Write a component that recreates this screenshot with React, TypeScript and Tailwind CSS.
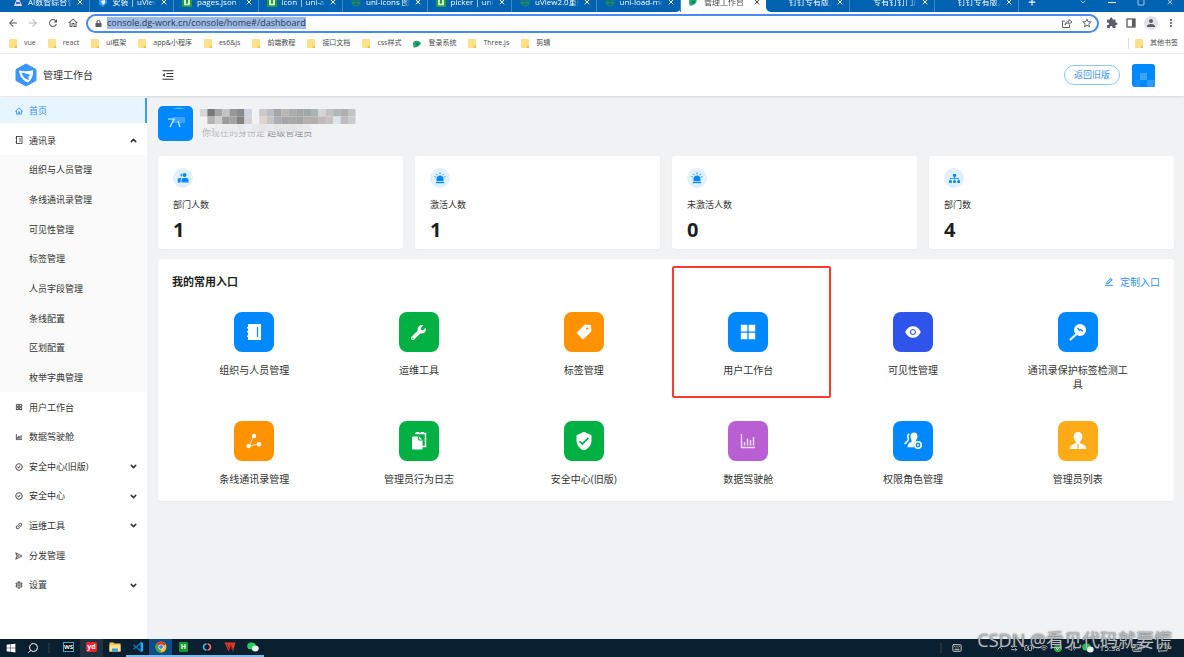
import React, { useState } from "react";
import {
  AiFillAppstore,
  AiFillEye,
  AiFillTag,
  AiOutlineAppstore,
  AiOutlineBarChart,
  AiOutlineCheckCircle,
  AiOutlineEdit,
  AiOutlineHome,
  AiOutlineLink,
  AiOutlineMenuFold,
  AiOutlineSend,
  AiOutlineSetting,
} from "react-icons/ai";
import { FaSitemap, FaWrench, FaLock, FaWindows } from "react-icons/fa";
import {
  MdArrowBack,
  MdArrowForward,
  MdExtension,
  MdMoreVert,
  MdOutlineHome,
  MdPerson,
  MdRefresh,
  MdStarBorder,
  MdVerifiedUser,
} from "react-icons/md";
import {
  BatteryCharging,
  ChevronDown,
  ChevronUp,
  Keyboard,
  MessageSquare,
  Plus,
  Search,
  Square,
  Volume2,
  Wifi,
  X,
  ArrowLeftRight,
} from "lucide-react";

/* ---------- icons ---------- */

const HBuilderIcon = () => (
  <svg viewBox="0 0 10 10" className="size-2.5 shrink-0">
    <rect width="10" height="10" rx="1" fill="#1fa32e" />
    <path d="M3 2v5.5h4V2" fill="none" stroke="#fff" strokeWidth="1.6" />
  </svg>
);

const GlobeIcon = () => (
  <svg viewBox="0 0 10 10" className="size-2.5 shrink-0">
    <circle cx="5" cy="5" r="4.5" fill="#1b8a6b" />
    <path d="M1 4h8M5 0.5v9M2 7.5h6" stroke="#0f5f8f" strokeWidth="0.8" />
  </svg>
);

const UViewIcon = () => (
  <svg viewBox="0 0 10 10" className="size-2.5 shrink-0">
    <path d="M1 1l8-1v6L5 10 1 7z" fill="#2f9bff" />
    <path d="M3 4l4-1v3L5 8z" fill="#fff" />
  </svg>
);

const BotIcon = () => (
  <svg viewBox="0 0 10 10" className="size-2.5 shrink-0">
    <path d="M5 0l3 6 1 3H1l1-3z" fill="#d9dcff" />
    <path d="M3 5h4v2H3z" fill="#4f5be0" />
  </svg>
);

const FolderIcon = () => (
  <svg viewBox="0 0 8 9" className="h-[9px] w-2 shrink-0">
    <path d="M0 1a1 1 0 011-1h6a1 1 0 011 1v8H1a1 1 0 01-1-1z" fill="#fce08a" />
    <path d="M6 7l2-.5V9H5.500z" fill="#f0c24c" />
  </svg>
);

const LeafIcon = () => (
  <svg viewBox="0 0 8 8" className="size-2 shrink-0">
    <path d="M0 2.500C2 0 6 .5 8 3 6 7 3 8 .5 7.500z" fill="#23a36d" />
    <path d="M3 3l3 .5L4 6z" fill="#0d6b57" />
  </svg>
);

const ShareIcon = () => (
  <svg viewBox="0 0 12 12" className="size-3" fill="none" stroke="currentColor" strokeWidth="1">
    <path d="M4 4H1.500v6.500h7V8" />
    <path d="M4 8c.3-2.500 2-3.700 4-3.800V2.500L11 5 8 7.300V5.800C6.300 5.800 5 6.500 4 8z" />
  </svg>
);

const LogoIcon = () => (
  <svg viewBox="0 0 22 24" className="h-6 w-[22px]">
    <path d="M11 1l10 5.500v11L11 23 1 17.500v-11z" fill="#3a96fb" stroke="#3a96fb" strokeLinejoin="round" />
    <path d="M4 7.500c5 1 9 1 14-.3.3 5-1 9.500-5.500 12.300C7.500 17 4.500 13 4 7.500z" fill="#fff" />
    <path d="M6.500 9.500l9 2.300-2.200 2 .6 3.200C10 16 7.500 13.500 6.500 9.500z" fill="#3a96fb" />
  </svg>
);

const BookIcon = () => (
  <svg viewBox="0 0 8 8" className="size-2" fill="none" stroke="currentColor">
    <rect x="1.500" y=".5" width="5.500" height="7" strokeWidth=".8" />
    <path d="M5 2v4M.5 2h1.500M.5 6h1.500" strokeWidth=".8" />
  </svg>
);

const PeopleIcon = () => (
  <svg viewBox="0 0 12 12" className="size-3" fill="currentColor">
    <circle cx="7.500" cy="3" r="2" />
    <path d="M4.500 10.500V8a2 2 0 012-2h3a2 2 0 012 2v2.500z" />
    <path d="M4.800 1.200a1.900 1.900 0 000 3.600zM3.600 10.500H.7V8c0-1.200.8-2 2-2h1.700c-.5.500-.8 1.200-.8 2z" />
  </svg>
);

const SirenIcon = () => (
  <svg viewBox="0 0 12 12" className="size-3" fill="currentColor">
    <path d="M2.500 9.300V7a3.500 3.500 0 017 0v2.300z" />
    <path d="M1.800 10h8.400v1.200H1.800z" />
    <path d="M6 .5v1.800M2.300 1.800l1 1.300M9.700 1.800l-1 1.300M.5 4.500l1.300.5M11.500 4.500l-1.300.5" stroke="currentColor" strokeWidth=".9" />
  </svg>
);

const ContactBookIcon = () => (
  <svg viewBox="0 0 16 18" className="h-[18px] w-4">
    <path d="M2 1h13v16H2v-3H1v-1.500h1v-3H1V8h1V5.500H1V4h1z" fill="#fff" />
    <path d="M11.500 4v10" stroke="#0089ff" strokeWidth="1.200" />
  </svg>
);

const InspectIcon = () => (
  <svg viewBox="0 0 18 18" className="size-[18px]">
    <circle cx="11" cy="7" r="6" fill="#fff" />
    <path d="M7 11.500L1.500 16.500" stroke="#fff" strokeWidth="2" strokeLinecap="round" />
    <path d="M8.500 5l2 2.300 1-.8 2.300 2" stroke="#0089ff" strokeWidth="1.300" fill="none" />
  </svg>
);

const NodesIcon = () => (
  <svg viewBox="0 0 18 18" className="size-[18px]" fill="#fff">
    <path d="M9 4L4 14l10-2" fill="none" stroke="#fff" strokeOpacity=".7" />
    <circle cx="9" cy="4" r="2.200" />
    <circle cx="3.700" cy="14" r="2.200" />
    <circle cx="14" cy="12.300" r="2.200" />
  </svg>
);

const LogsIcon = () => (
  <svg viewBox="0 0 16 18" className="h-[18px] w-4">
    <path d="M4 1.500h2V.5h1.500v1h3v-1H12v1h2.500v13H11" fill="none" stroke="#fff" strokeWidth="1.500" />
    <path d="M2 4.500h6L11.500 8v8.500a1 1 0 01-1 1H2a1 1 0 01-1-1v-11a1 1 0 011-1z" fill="#fff" />
    <path d="M7.500 4.500V8H11" fill="none" stroke="#00b042" strokeWidth="1" />
  </svg>
);

const ChartIcon = () => (
  <svg viewBox="0 0 16 16" className="size-4" fill="none" stroke="#fff" strokeOpacity=".8">
    <path d="M1.500 1v13.500H15" strokeWidth="1.400" />
    <path d="M4.500 12.500V9M7.500 12.500V5.500M10.500 12.500V7M13.500 12.500V4" strokeWidth="1.500" />
  </svg>
);

const RoleIcon = () => (
  <svg viewBox="0 0 18 18" className="size-[18px]" fill="#fff">
    <path d="M10 .5c2 0 3.500 1.600 3.500 3.800 0 1.600-.7 2.900-1.500 3.700v1.200c-1.500 1-2.300 2.300-2.300 3.800 0 .8.200 1.500.5 2.200H3.500c.2-3 1-4.200 4-5.200V8C6.900 7.200 6.500 6 6.500 4.300 6.500 2 8 .5 10 .5z" />
    <path d="M5.300 2C3.700 2.800 3.300 4.500 4.500 7c0 2-1 2.500-4 5" fill="none" stroke="#fff" strokeWidth="1.500" />
    <circle cx="14" cy="13" r="3.200" fill="none" stroke="#fff" strokeWidth="1.600" />
    <circle cx="14" cy="13" r="1" />
  </svg>
);

const AdminIcon = () => (
  <svg viewBox="0 0 18 18" className="size-[18px]">
    <path
      d="M9 0c2.600 0 4.300 2 4.300 4.600 0 2.200-1 3.900-2.100 4.800v2c3.500.9 6 2 6 5.600H.8c0-3.600 2.500-4.700 6-5.600v-2c-1.100-.9-2.100-2.600-2.100-4.800C4.700 2 6.400 0 9 0z"
      fill="#fff"
    />
    <path d="M9 12v4.500" stroke="#ffab17" strokeWidth="1.300" />
  </svg>
);

const WeChatIcon = () => (
  <svg viewBox="0 0 12 10" className="h-2.5 w-3">
    <ellipse cx="4.500" cy="4" rx="4.300" ry="3.600" fill="#1fd05f" />
    <ellipse cx="8.300" cy="6.500" rx="3.400" ry="2.900" fill="#e9f2ec" />
  </svg>
);

const ChromeIcon = () => (
  <svg viewBox="0 0 12 12" className="size-3">
    <circle cx="6" cy="6" r="5.500" fill="#fbc116" />
    <path d="M6 6L1.200 3.300A5.500 5.500 0 0110.800 3.300z" fill="#e33b2e" />
    <path d="M6 6L1.200 3.300A5.500 5.500 0 005.500 11.500z" fill="#2da94f" />
    <circle cx="6" cy="6" r="2.600" fill="#fff" />
    <circle cx="6" cy="6" r="2" fill="#4285f4" />
  </svg>
);

const VsCodeIcon = () => (
  <svg viewBox="0 0 12 12" className="size-3" fill="none">
    <path d="M8.500 2.500L1.500 8M8.500 9.500L1.500 4" stroke="#1577be" strokeWidth="1.500" />
    <path d="M8.500.8l2.700 1.100v8.200l-2.700 1.100z" fill="#2aa5f5" />
  </svg>
);

const ExplorerIcon = () => (
  <svg viewBox="0 0 12 10" className="h-2.5 w-3">
    <path d="M.5.5h4l1 1h6v8H.5z" fill="#f7c64b" />
    <path d="M.5 3h11v6.500H.5z" fill="#fde398" />
    <path d="M3 9.500V6.500h6v3z" fill="#3f9fe0" />
  </svg>
);

const WpsIcon = () => (
  <svg viewBox="0 0 12 10" className="h-2.5 w-3">
    <path d="M.5.5h11L9 9.500 6.500 4 4.500 9.500z" fill="#e33a24" />
    <path d="M3 2l1.700 5M6 2l3 6" stroke="#7a1509" strokeWidth=".8" />
  </svg>
);

const RingIcon = () => (
  <svg viewBox="0 0 10 10" className="size-2.5">
    <rect width="10" height="10" rx="2" fill="#0b1726" />
    <path d="M4.500 2A3 3 0 004.500 8" fill="none" stroke="#35c3f0" strokeWidth="1.500" />
    <path d="M5.500 2A3 3 0 015.500 8" fill="none" stroke="#f07b5b" strokeWidth="1.500" />
  </svg>
);

/* ---------- data ---------- */

const leftTabs = [
  { title: "AI数智综合管", icon: <BotIcon /> },
  { title: "安装 | uView", icon: <UViewIcon /> },
  { title: "pages.json :", icon: <HBuilderIcon /> },
  { title: "icon | uni-app", icon: <HBuilderIcon /> },
  { title: "uni-icons 图标", icon: <GlobeIcon /> },
  { title: "picker | uni-app", icon: <HBuilderIcon /> },
  { title: "uView2.0重磅", icon: <GlobeIcon /> },
  { title: "uni-load-more", icon: <GlobeIcon /> },
];

const rightTabs = ["钉钉专有版方", "专有钉钉门户", "钉钉专有版方"];

const bookmarks = [
  "vue",
  "react",
  "ui框架",
  "app&小程序",
  "es6&js",
  "前端教程",
  "接口文档",
  "css样式",
  "登录系统",
  "Three.js",
  "剪辑",
];

const contactMenu = [
  "组织与人员管理",
  "条线通讯录管理",
  "可见性管理",
  "标签管理",
  "人员字段管理",
  "条线配置",
  "区划配置",
  "枚举字典管理",
];

const menu = [
  { label: "用户工作台", icon: <AiOutlineAppstore /> },
  { label: "数据驾驶舱", icon: <AiOutlineBarChart /> },
  { label: "安全中心(旧版)", icon: <AiOutlineCheckCircle />, more: true },
  { label: "安全中心", icon: <AiOutlineCheckCircle />, more: true },
  { label: "运维工具", icon: <AiOutlineLink />, more: true },
  { label: "分发管理", icon: <AiOutlineSend /> },
  { label: "设置", icon: <AiOutlineSetting />, more: true },
];

const stats = [
  { label: "部门人数", value: 1, icon: <PeopleIcon /> },
  { label: "激活人数", value: 1, icon: <SirenIcon /> },
  { label: "未激活人数", value: 0, icon: <SirenIcon /> },
  { label: "部门数", value: 4, icon: <FaSitemap className="size-[11px]" /> },
];

const entries = [
  { label: "组织与人员管理", color: "bg-[#0089ff]", icon: <ContactBookIcon /> },
  { label: "运维工具", color: "bg-[#00b042]", icon: <FaWrench className="size-[15px]" /> },
  { label: "标签管理", color: "bg-[#ff9200]", icon: <AiFillTag className="size-[18px]" /> },
  { label: "用户工作台", color: "bg-[#0089ff]", icon: <AiFillAppstore className="size-5" />, marked: true },
  { label: "可见性管理", color: "bg-[#2f54eb]", icon: <AiFillEye className="size-[18px]" /> },
  { label: "通讯录保护标签检测工具", color: "bg-[#0089ff]", icon: <InspectIcon /> },
  { label: "条线通讯录管理", color: "bg-[#ff9200]", icon: <NodesIcon /> },
  { label: "管理员行为日志", color: "bg-[#00b042]", icon: <LogsIcon /> },
  { label: "安全中心(旧版)", color: "bg-[#00b042]", icon: <MdVerifiedUser className="size-5" /> },
  { label: "数据驾驶舱", color: "bg-[#b95fd3]", icon: <ChartIcon /> },
  { label: "权限角色管理", color: "bg-[#0089ff]", icon: <RoleIcon /> },
  { label: "管理员列表", color: "bg-[#ffab17]", icon: <AdminIcon /> },
];

const taskbarApps = [
  { name: "WebStorm", icon: <span className="border border-[#21b5d8] bg-black text-[6px] leading-2 font-bold text-white">WS</span> },
  { name: "有道", icon: <span className="rounded-[2px] bg-[#f5222d] px-px text-[7px] leading-2.5 font-bold text-white">yd</span>, cell: "bg-[#20313f]" },
  { name: "Explorer", icon: <ExplorerIcon /> },
  { name: "VS Code", icon: <VsCodeIcon />, open: true },
  { name: "Chrome", icon: <ChromeIcon />, open: true, cell: "bg-[#0f4c88]" },
  { name: "HBuilder", icon: <span className="rounded-[1px] bg-[#0c9a30] px-0.5 text-[7px] leading-2.5 font-bold text-white">H</span>, open: true },
  { name: "Ring", icon: <RingIcon />, open: true },
  { name: "WPS", icon: <WpsIcon />, open: true },
  { name: "WeChat", icon: <WeChatIcon />, open: true },
];

// censored user name, one colour per block
const nameBlocks = [
  ["#d6d6d8", "#777777", "#a5a5a5", "#c4c4c4", "#989898", "#8b8b8b", "#cfd3dc", "", "#cdc9cb", "#b9bcc2", "#a3a5a9", "#bbb7b4", "#a9adb2", "#a4a6a6", "#a3a8a8", "#a9b5b2", "#d5d5d8", "#c2c2c4", "#b5b5b5", "#b0b0b1", "#c3c3c5"],
  ["", "#b3b1b1", "#cfcdcd", "#9c9c9c", "#a3a3a3", "#838383", "#d2d2d6", "", "#ddd5d6", "#c9c5c6", "#acaeb3", "#a6a6a8", "#a9a9a9", "#a3a3a3", "#b1b1b1", "#b3aeac", "#bdbabb", "#c7c2c4", "#dfe4ea", "#bdbdbf", "#cbcbcd"],
  ["", "", "#ededef", "#eaebed", "#ebecee", "#e7e8ea", "#eeeff1", "#e9e9ec", "#e6e6e9", "#e8e9eb", "#e4e5e7", "#e7e8ea", "#e5e5e8", "#e7e7ea", "#e9eaec", "", "", "", "", "", ""],
];

/* ---------- browser chrome ---------- */

const Tab: React.FC<{ title: string; icon?: React.ReactNode; active?: boolean }> = ({ title, icon, active }) => (
  <div
    className={`flex h-5 min-w-0 items-center pr-[5px] pl-2 ${
      active ? "text-[#444]" : "border-r border-[#3f8ac6] text-white"
    }`}
  >
    <span className="mr-[5px] flex w-2.5 shrink-0">{icon}</span>
    <span className="min-w-0 flex-1 overflow-hidden text-[8px] whitespace-nowrap mask-r-from-85% mask-r-to-100%">
      {title}
    </span>
    <button aria-label="关闭" className="ml-1 shrink-0">
      <X className="size-2" strokeWidth={3} />
    </button>
  </div>
);

const TabStrip = () => (
  <div className="flex h-3 items-end overflow-hidden bg-white">
    <div className="flex h-5 rounded-br-[5px] bg-[#0063b1] pl-[5px]">
      <div className="grid w-[676px] grid-cols-8">
        {leftTabs.map((tab) => (
          <Tab key={tab.title} title={tab.title} icon={tab.icon} />
        ))}
      </div>
    </div>
    <div className="w-[85px]">
      <Tab title="管理工作台" icon={<LeafIcon />} active />
    </div>
    <div className="flex h-5 flex-1 items-center rounded-bl-[5px] bg-[#0063b1] text-white">
      <div className="grid w-[253px] grid-cols-3">
        {rightTabs.map((title, i) => (
          <Tab key={i} title={title} />
        ))}
      </div>
      <button aria-label="新标签页" className="ml-2">
        <Plus className="size-2.5" strokeWidth={3} />
      </button>
      <div className="ml-auto flex items-center gap-[21px] pr-2.5">
        <ChevronDown className="size-2" />
        <span className="h-px w-2 bg-white" />
        <Square className="size-2" />
        <X className="size-2" />
      </div>
    </div>
  </div>
);

const Toolbar: React.FC = () => {
  const [url, setUrl] = useState("console.dg-work.cn/console/home#/dashboard");
  return (
    <div className="flex h-[22px] items-center bg-white px-[7px] text-[#5a5d61]">
      <div className="flex w-[79px] items-center gap-2">
        <button aria-label="后退"><MdArrowBack className="size-3" /></button>
        <button aria-label="前进" className="text-[#b6b8ba]"><MdArrowForward className="size-3" /></button>
        <button aria-label="刷新"><MdRefresh className="size-3" /></button>
        <button aria-label="主页"><MdOutlineHome className="size-3" /></button>
      </div>
      <div className="flex h-[19px] min-w-0 flex-1 items-center rounded-full border-2 border-[#4a8af0] pr-1 pl-[7px]">
        <FaLock className="size-[7px] shrink-0" />
        <input
          aria-label="地址"
          value={url}
          onChange={(e) => setUrl(e.target.value)}
          className="ml-[5px] field-sizing-content h-3 bg-[#9db9e6] text-[9px] leading-3 text-[#2f3b52] outline-none"
        />
        <button aria-label="分享" className="ml-auto"><ShareIcon /></button>
        <button aria-label="收藏" className="ml-2"><MdStarBorder className="size-3" /></button>
      </div>
      <div className="flex items-center gap-[7px] pl-[7px]">
        <MdExtension className="size-3" />
        <svg viewBox="0 0 12 12" className="size-3">
          <rect x="2" y="2" width="8" height="8" fill="none" stroke="currentColor" strokeWidth="1.300" />
          <path d="M7 2h3v8H7z" fill="currentColor" />
        </svg>
        <span className="flex size-3.5 items-center justify-center rounded-full bg-[#dfe2e7]">
          <MdPerson className="size-3" />
        </span>
        <button aria-label="菜单"><MdMoreVert className="size-3" /></button>
      </div>
    </div>
  );
};

const Bookmarks = () => (
  <div className="flex h-5 items-center border-b border-[#eeeeee] bg-white pr-1.5 pl-[9px] text-[7px] text-[#4b4b4b]">
    <div className="flex items-center gap-3">
      {bookmarks.map((name) => (
        <a key={name} href="#" className="flex items-center gap-[7px] whitespace-nowrap">
          {name === "登录系统" ? <LeafIcon /> : <FolderIcon />}
          {name}
        </a>
      ))}
    </div>
    <a href="#" className="ml-auto flex items-center gap-[7px] border-l border-[#dddddd] pl-1.5 whitespace-nowrap">
      <FolderIcon />
      其他书签
    </a>
  </div>
);

/* ---------- console ---------- */

const Header = () => (
  <header className="z-10 flex h-[42px] items-center bg-white pr-[29px] pl-[15px] shadow-[0_1px_2px_#0000001f]">
    <div className="flex w-[146px] items-center gap-1.5">
      <LogoIcon />
      <h1 className="text-[10px] text-[#333]">管理工作台</h1>
    </div>
    <button aria-label="收起菜单">
      <AiOutlineMenuFold className="size-3.5 text-[#333]" />
    </button>
    <button className="ml-auto h-5 w-14 rounded-full border border-[#8cc5ff] text-[9px] text-[#3b93f7]">
      返回旧版
    </button>
    <svg viewBox="0 0 23 23" className="ml-3 size-[23px]">
      <path d="M3 0h17a3 3 0 013 3v20H3a3 3 0 01-3-3V3a3 3 0 013-3z" fill="#0089ff" />
      <rect x="8" y="9" width="7" height="7" fill="#3aa5ff" />
      <rect x="3" y="16" width="5" height="7" fill="#1291ff" />
      <rect x="15" y="16" width="8" height="7" fill="#2a9cff" />
    </svg>
  </header>
);

const Sidebar = () => (
  <aside className="w-[147px] shrink-0 bg-white text-[9px] text-[#333]">
    <ul className="grid h-[504px] grid-rows-[repeat(17,1fr)]">
      <li className="flex items-center">
        <a href="#" className="flex h-[25px] w-full items-center gap-1.5 border-r-2 border-[#3a9bfb] bg-[#e6f5ff] pl-[15px] text-[#2e90fa]">
          <AiOutlineHome className="size-2 stroke-current [stroke-width:30]" />
          首页
        </a>
      </li>
      <li className="flex items-center gap-1.5 pr-[9px] pl-[15px]">
        <BookIcon />
        <a href="#" className="flex-1">通讯录</a>
        <ChevronUp className="size-[9px]" strokeWidth={4} />
      </li>
      <li className="row-span-8 bg-[#fafafa]">
        <ul className="grid h-full grid-rows-8">
          {contactMenu.map((label) => (
            <li key={label} className="flex items-center pl-[29px]">
              <a href="#">{label}</a>
            </li>
          ))}
        </ul>
      </li>
      {menu.map((item) => (
        <li key={item.label} className="flex items-center gap-1.5 pr-[9px] pl-[15px]">
          <span className="flex text-[8px] [&_svg]:[stroke-width:30]">{item.icon}</span>
          <a href="#" className="flex-1">{item.label}</a>
          {item.more && <ChevronDown className="size-[9px]" strokeWidth={4} />}
        </li>
      ))}
    </ul>
  </aside>
);

const UserInfo = () => (
  <div className="flex h-[35px] items-start gap-[7px]">
    <svg viewBox="0 0 35 35" className="size-[35px] shrink-0">
      <rect width="35" height="35" rx="5" fill="#0089ff" />
      <path d="M14 3q7-3 14 0z" fill="#5ab4ff" />
      <rect x="15" y="11" width="12" height="6" fill="#3aa4ff" />
      <path d="M10 13h6l-4 8M20 15l2 6" fill="none" stroke="#e6f4ff" strokeWidth="1.200" />
    </svg>
    <div className="relative pt-5">
      <p className="ml-0.5 text-[9px] leading-3.5 text-[#b4b6b8]">
        你现在的身份是 <span className="text-[#8f9295]">超级管理员</span>
      </p>
      <svg viewBox="0 0 156 23" className="absolute top-[3px] left-0 h-[23px] w-[156px]">
        {nameBlocks.map((row, y) =>
          row.map((fill, x) => fill && <rect key={`${x}-${y}`} x={x * 7.4} y={y * 7.5} width="7.5" height="7.5" fill={fill} />)
        )}
      </svg>
    </div>
  </div>
);

const Dashboard = () => (
  <main className="min-w-0 flex-1 bg-[#f0f2f4] pt-2.5 pr-2.5 pb-6 pl-[11px]">
    <UserInfo />
    <div className="mt-[15px] grid grid-cols-4 gap-3">
      {stats.map((stat) => (
        <section key={stat.label} className="h-[93px] rounded-[3px] bg-white px-[15px] pt-3 shadow-[0_1px_2px_#0000000a]">
          <span className="flex size-5 items-center justify-center rounded-full bg-[#e0f0ff] text-[#0089ff]">
            {stat.icon}
          </span>
          <p className="mt-2.5 text-[9px] leading-3.5 text-[#333]">{stat.label}</p>
          <p className="mt-1 text-[20px] leading-7 font-bold text-[#1f1f1f]">{stat.value}</p>
        </section>
      ))}
    </div>
    <section className="mt-2.5 rounded-[3px] bg-white px-3.5 py-[15px] shadow-[0_1px_2px_#0000000a]">
      <div className="flex h-4 items-center justify-between">
        <h2 className="text-[11px] font-bold text-[#1f1f1f]">我的常用入口</h2>
        <button className="flex items-center gap-1.5 text-[10px] text-[#2e90fa]">
          <AiOutlineEdit className="size-2.5 stroke-current [stroke-width:20]" />
          定制入口
        </button>
      </div>
      <ul className="mt-[22px] grid grid-cols-6 gap-y-[30px]">
        {entries.map((entry) => (
          <li key={entry.label} className="relative flex flex-col items-center">
            <span className={`flex size-10 items-center justify-center rounded-lg text-white ${entry.color}`}>
              {entry.icon}
            </span>
            <a href="#" className="mt-[11px] w-[104px] text-center text-[10px] leading-3.5 text-[#333]">
              {entry.label}
            </a>
            {entry.marked && (
              <span className="pointer-events-none absolute -top-[46px] right-0 -bottom-[7px] left-1.5 rounded-[2px] border-2 border-[#ff3b30]" />
            )}
          </li>
        ))}
      </ul>
    </section>
  </main>
);

/* ---------- desktop ---------- */

const Taskbar = () => (
  <footer className="relative flex h-[18px] items-center bg-[#0a2030] text-white">
    <button aria-label="开始" className="flex w-[22px] justify-center"><FaWindows className="size-2.5" /></button>
    <button aria-label="搜索" className="flex w-[22px] justify-center"><Search className="size-3 -scale-x-100" /></button>
    <span className="mr-[7px] ml-1 h-2.5 w-0.5 bg-[#20303f]" />
    {taskbarApps.map((app) => (
      <button
        key={app.name}
        aria-label={app.name}
        className={`flex h-full w-[23px] items-center justify-center border-b-2 ${
          app.open ? "border-[#76b9ed]" : "border-transparent"
        } ${app.cell ?? ""}`}
      >
        {app.icon}
      </button>
    ))}
    <div className="ml-auto flex items-center gap-1.5 pr-4 text-[#e5e5e5]">
      <span className="mr-1 h-2.5 w-0.5 bg-[#20303f]" />
      <Keyboard className="mr-7 size-2.5" />
      <ChevronUp className="size-2" />
      <ArrowLeftRight className="size-2" />
      <BatteryCharging className="size-2.5" />
      <Wifi className="size-2" />
      <svg viewBox="0 0 8 8" className="size-2">
        <circle cx="4" cy="4" r="4" fill="#2bb24c" />
        <path d="M2 4l1.500 1.500L6 2.500" fill="none" stroke="#fff" />
      </svg>
      <Volume2 className="size-2" />
      <WeChatIcon />
      <span className="text-[8px]">15:38</span>
      <Keyboard className="ml-1.5 size-2.5" />
      <MessageSquare className="ml-2.5 size-2.5" />
    </div>
    <p className="pointer-events-none absolute right-3 bottom-[5px] text-[18px] leading-6 whitespace-nowrap text-[#b9bdc1] [text-shadow:0_0_2px_#333]">
      CSDN @看见代码就要慌
    </p>
  </footer>
);

const App: React.FC = () => {
  return (
    <div className="flex min-h-screen flex-col bg-white font-['Open_Sans','Noto_Sans_CJK_SC',sans-serif]">
      <TabStrip />
      <Toolbar />
      <Bookmarks />
      <Header />
      <div className="flex flex-1">
        <Sidebar />
        <Dashboard />
      </div>
      <Taskbar />
    </div>
  );
};

export default App;
